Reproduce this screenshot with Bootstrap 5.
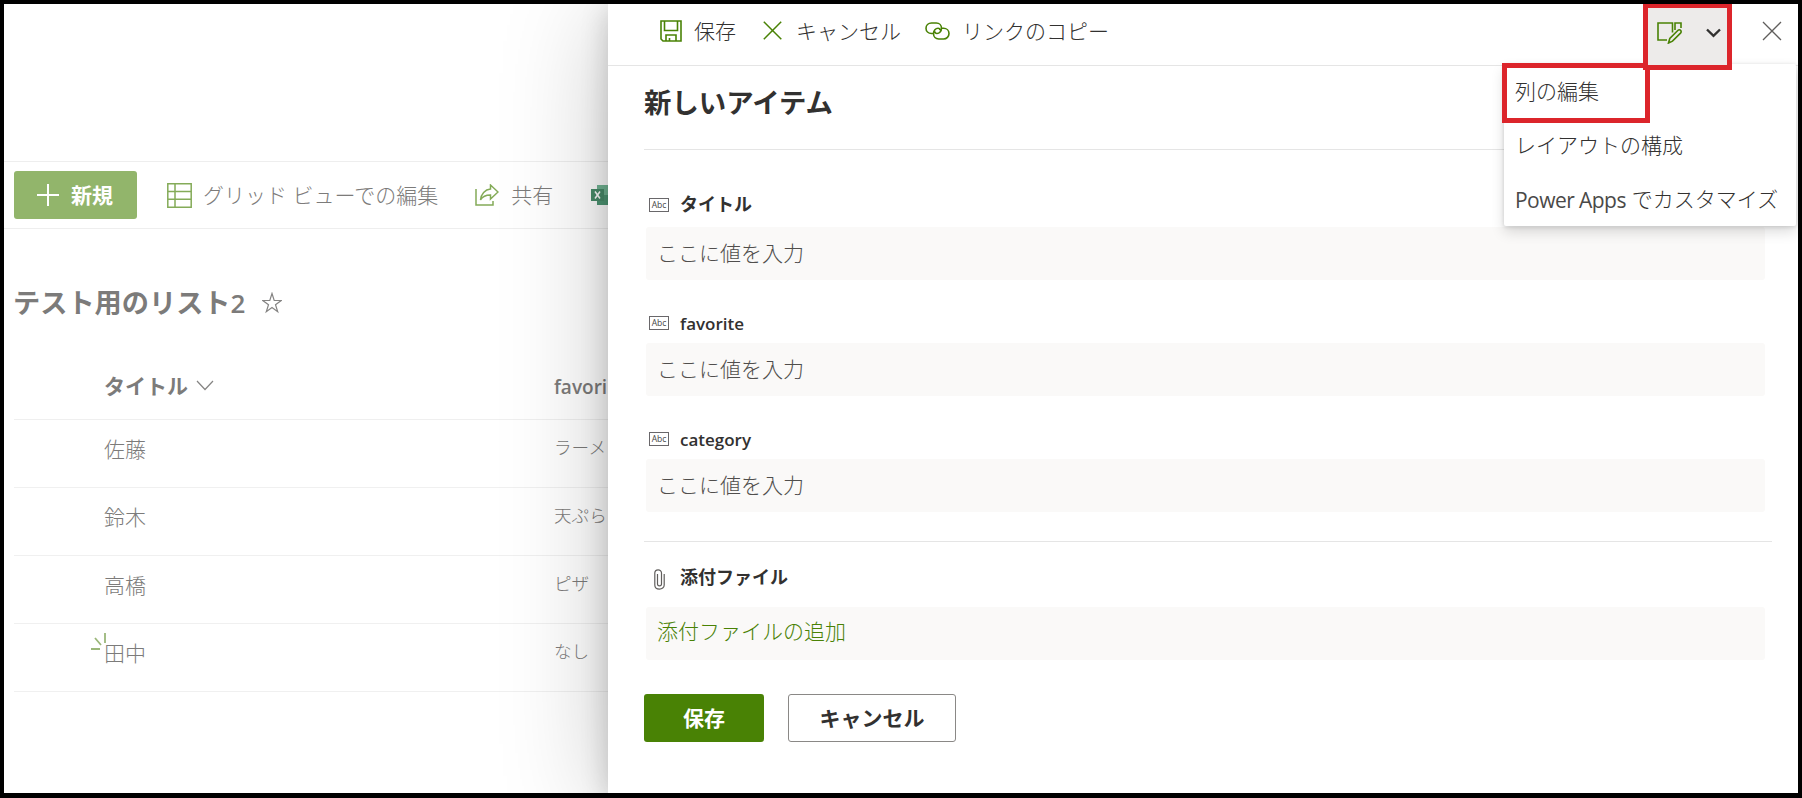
<!DOCTYPE html>
<html lang="ja">
<head>
<meta charset="utf-8">
<meta name="viewport" content="width=device-width, initial-scale=1">
<title>テスト用のリスト2</title>
<link href="https://cdn.jsdelivr.net/npm/bootstrap@5.3.0/dist/css/bootstrap.min.css" rel="stylesheet">
<style>
  body { font-family: "Open Sans", "Noto Sans CJK JP", sans-serif; font-size: 21px; line-height: 30px; color: #323130; overflow: hidden; }
  svg { fill: none; display: block; flex: none; }
  .frame { height: 798px; border: 4px solid #000; border-bottom-width: 5px; background: #fff; overflow: hidden; }
  .thin { font-weight: 300; }
  .list-side { width: 604px; flex: none; color: #7c7b7a; white-space: nowrap; }
  .list-bar { margin-top: 157px; height: 68px; border-top: 1px solid #eee; border-bottom: 1px solid #eee; padding-left: 10px; }
  .list-bar span { padding-bottom: 1px; }
  .new-btn { width: 123px; height: 48px; background: #92b56b; color: #fff; border-radius: 3px; padding-left: 23px; gap: 12px; font-weight: 700; }
  .list-title { font-size: 27.2px; font-weight: 700; margin: 54px 0 0 9px; height: 40px; gap: 17px; }
  .list-title .num { font-weight: 600; font-size: 26px; }
  .list-head { height: 68px; margin: 29px 0 0 10px; padding-left: 90px; border-bottom: 1px solid #efefef; font-weight: 600; }
  .list-line { height: 68px; margin-left: 10px; padding: 0 0 9px 90px; border-bottom: 1px solid #f0f0f0; }
  .name-cell { width: 450px; flex: none; }
  .fav-cell { font-size: 17.6px; padding-bottom: 5px; }
  .spark { left: -14px; top: -6px; }
  .panel { background: #fff; z-index: 2; box-shadow: 0 10px 100px rgba(0,0,0,.23), 0 5px 26px rgba(0,0,0,.18); }
  .panel-bar { height: 62px; border-bottom: 1px solid #e5e5e5; padding: 0 16px 8px 52px; }
  .panel-body { padding: 0 26px 0 36px; }
  .panel-title { font-size: 27.4px; line-height: 36px; font-weight: 700; margin: 0; padding-top: 19px; height: 84px; border-bottom: 1px solid #e5e5e5; }
  .field { padding: 0 7px 0 2px; }
  .field-label { font-size: 18px; line-height: 26px; font-weight: 700; gap: 11px; padding-left: 3px; height: 26px; }
  .field-label span:last-child { padding-bottom: 2px; }
  .field-label.latin { font-weight: 600; font-size: 17px; }
  .field-label.latin span:last-child { padding: 2px 0 0; }
  .field-box { background: #faf9f8; border-radius: 3px; height: 53px; color: #504e4c; padding: 0 0 2px 11px; }
  .abc { width: 20px; height: 14px; border: 1.5px solid #69676a; font: 8.5px/11px "Open Sans", sans-serif; color: #444; text-align: center; }
  .act { height: 48px; border-radius: 3px; font-weight: 700; display: flex; align-items: center; justify-content: center; padding-bottom: 1px; }
  .act-save { width: 120px; background: #498205; color: #fff; }
  .act-cancel { width: 168px; border: 1px solid #8a8886; color: #323130; font-weight: 600; }
  .split { margin-top: 29px; height: 1px; background: #e5e5e5; }
  .edit-btn { width: 89px; height: 67px; right: 66px; top: -1px; background: #edebea; border: 5px solid #dc252b; z-index: 4; padding: 0 6px 7px 9px; }
  .drop { left: 896px; top: 60px; width: 292px; height: 162px; background: #fff; border-radius: 2px; box-shadow: 0 6px 14px rgba(0,0,0,.14), 0 1px 4px rgba(0,0,0,.14); z-index: 3; }
  .drop-row { height: 54px; padding-left: 11px; white-space: nowrap; }
  .mark-box { left: -2px; top: -1px; width: 148px; height: 60px; border: 5px solid #dc252b; }
  .app-name { letter-spacing: -.55px; color: #4a4948; padding-top: 2px; }
</style>
</head>
<body>
<div class="frame d-flex">
  <main class="list-side">
    <div class="list-bar d-flex align-items-center">
      <div class="new-btn d-flex align-items-center me-4">
        <svg width="22" height="22" stroke="#fff" stroke-width="2"><path d="M11 0v22M0 11h22"/></svg><span>新規</span>
      </div>
      <div class="d-flex align-items-center thin" style="margin-left:6px">
        <svg width="25" height="25" stroke="#84ab58" stroke-width="1.5"><path d="M.8.8h23.4v23.4H.8zM.8 8.500h23.4M.8 16.300h23.4M8 .8v23.4"/></svg>
        <span style="margin-left:11px">グリッド ビューでの編集</span>
      </div>
      <div class="d-flex align-items-center thin" style="margin-left:37px">
        <svg width="24" height="22" stroke="#84ab58" stroke-width="1.5"><path d="M1 5v16h17v-4M15.500 1l7.500 7-7.500 7v-4c-5 0-8 1.500-10 5 .5-6 4.500-10.500 10-11z"/></svg>
        <span class="ms-2 ps-1">共有</span>
      </div>
      <svg class="ms-auto" width="17" height="22"><path d="M6 1h11v20H6z" fill="#73b795"/><path d="M6 11h11v10H6z" fill="#4f9875"/><path d="M0 5h13v12H0z" fill="#4a8d6b"/><path d="M4 7.500l5 7M9 7.500l-5 7" stroke="#fff" stroke-width="1.500"/></svg>
    </div>
    <h1 class="list-title d-flex align-items-center">
      <span>テスト用のリスト<span class="num">2</span></span>
      <svg width="20" height="22" viewBox="0 0 20 22" stroke="#858483" stroke-width="1.200"><path d="M10 1.500l2.200 7h7l-5.700 4.200 2.200 7L10 15.500l-5.700 4.200 2.200-7L.8 8.500h7z"/></svg>
    </h1>
    <div class="list-head d-flex align-items-center">
      <span class="name-cell d-flex align-items-center gap-2"><span>タイトル</span><svg width="18" height="11" stroke="#858483" stroke-width="1.200"><path d="M1 1l8 8.500L17 1"/></svg></span>
      <span style="font-size:19px;padding-top:2px">favori</span>
    </div>
    <div class="list-line d-flex align-items-center thin"><span class="name-cell">佐藤</span><span class="fav-cell">ラーメ</span></div>
    <div class="list-line d-flex align-items-center thin"><span class="name-cell">鈴木</span><span class="fav-cell">天ぷら</span></div>
    <div class="list-line d-flex align-items-center thin"><span class="name-cell">高橋</span><span class="fav-cell">ピザ</span></div>
    <div class="list-line d-flex align-items-center thin"><span class="name-cell position-relative"><svg class="spark position-absolute" width="17" height="20" stroke="#9bb77a" stroke-width="1.800"><path d="M15 1v10M5 6l6 7M1 17h9"/></svg>田中</span><span class="fav-cell">なし</span></div>
  </main>

  <section class="panel flex-fill position-relative">
    <div class="panel-bar d-flex align-items-center thin">
      <svg width="22" height="22" stroke="#498205" stroke-width="1.600"><path d="M1 1h20v20H3l-2-2zM4.500 1v9.500h13V1M6 21v-6h10v6M9.500 21v-3"/></svg>
      <span style="margin-left:12px">保存</span>
      <svg style="margin-left:27px" width="19" height="19" stroke="#498205" stroke-width="1.500"><path d="M.8.8l17.500 17.500M18.200.8L.8 18.200"/></svg>
      <span style="margin-left:14px">キャンセル</span>
      <svg style="margin-left:24px" width="25" height="18" viewBox="0 0 25 18" stroke="#498205" stroke-width="1.600"><path d="M8 11.500H6.500C3.300 11.500 1 9.300 1 6.300S3.300 1 6.500 1h4.800c3 0 5.200 2.200 5.200 5.200s-2.200 5.300-4.500 5.300c-1.300 0-2-.8-2-2M17 6.300h1.500c3.200 0 5.500 2.200 5.500 5.200s-2.300 5.500-5.500 5.500h-4.800c-3 0-5.200-2.400-5.200-5.400s2.200-5.300 4.500-5.300c1.300 0 2 .8 2 2"/></svg>
      <span style="margin-left:12px">リンクのコピー</span>
      <svg class="ms-auto" width="20" height="20" stroke="#605e5c" stroke-width="1.300"><path d="M1 1l18 18M19 1L1 19"/></svg>
    </div>

    <div class="edit-btn position-absolute d-flex align-items-center justify-content-between">
      <svg width="25" height="22" stroke="#498205" stroke-width="1.600"><path d="M10 18H1V1h14.500v9.500M18 8V1h6v5"/><path d="M11.500 21l1.300-4.500 8-8c1-1 2.300-.8 2.900 0s.5 1.800-.2 2.600l-8 8z"/></svg>
      <svg width="15" height="10" stroke="#323130" stroke-width="2.400"><path d="M1 1.500l6.500 6.300L14 1.500"/></svg>
    </div>
    <div class="drop position-absolute thin">
      <div class="mark-box position-absolute"></div>
      <div class="drop-row d-flex align-items-center">列の編集</div>
      <div class="drop-row d-flex align-items-center">レイアウトの構成</div>
      <div class="drop-row d-flex align-items-center"><span class="app-name fw-normal">Power Apps</span><span style="margin-left:6px">でカスタマイズ</span></div>
    </div>

    <div class="panel-body">
      <h2 class="panel-title">新しいアイテム</h2>
      <div class="field" style="padding-top:42px">
        <div class="field-label d-flex align-items-center"><span class="abc">Abc</span><span>タイトル</span></div>
        <div class="field-box d-flex align-items-center thin" style="margin-top:9px">ここに値を入力</div>
      </div>
      <div class="field" style="padding-top:30px">
        <div class="field-label latin d-flex align-items-center"><span class="abc">Abc</span><span>favorite</span></div>
        <div class="field-box d-flex align-items-center thin" style="margin-top:7px">ここに値を入力</div>
      </div>
      <div class="field" style="padding-top:30px">
        <div class="field-label latin d-flex align-items-center"><span class="abc">Abc</span><span>category</span></div>
        <div class="field-box d-flex align-items-center thin" style="margin-top:7px">ここに値を入力</div>
      </div>
      <div class="split"></div>
      <div class="field" style="padding-top:23px">
        <div class="field-label d-flex align-items-center"><svg style="margin:2px 4px 0 5px" width="11" height="21" viewBox="0 0 11 21" stroke="#605e5c" stroke-width="1.200"><path d="M3.500 5v10c0 2.500 4 2.500 4 0V4c0-4.300-6.700-4.300-6.700 0v12c0 5.500 9.400 5.500 9.400 0V5"/></svg><span>添付ファイル</span></div>
        <div class="field-box d-flex align-items-center thin" style="margin-top:16px;padding-bottom:6px;color:#498205">添付ファイルの追加</div>
      </div>
      <div class="d-flex" style="margin-top:34px;gap:24px">
        <div class="act act-save">保存</div>
        <div class="act act-cancel">キャンセル</div>
      </div>
    </div>
  </section>
</div>
<script src="https://cdn.jsdelivr.net/npm/bootstrap@5.3.0/dist/js/bootstrap.bundle.min.js"></script>
</body>
</html>
